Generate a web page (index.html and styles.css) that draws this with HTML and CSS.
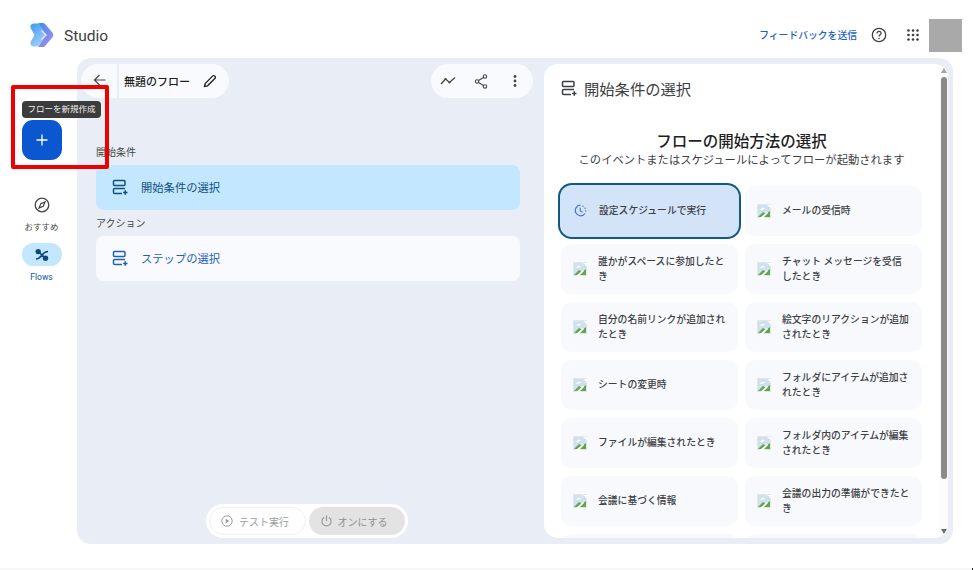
FILE: index.html
```html
<!DOCTYPE html>
<html lang="ja">
<head>
    <meta charset="UTF-8">
    <meta name="viewport" content="width=device-width, initial-scale=1.0">
    <title>Studio</title>
    <link rel="stylesheet" href="styles.css">
</head>
<body>
    <svg class="defs" width="0" height="0">
        <symbol id="step" viewBox="0 0 16 16">
            <rect x="1.5" y="1.5" width="11.5" height="5" rx="1" fill="none" stroke="currentColor" stroke-width="1.5"/>
            <path d="M13 9.5H2.8a1.3 1.3 0 0 0-1.3 1.3v2.4a1.3 1.3 0 0 0 1.3 1.3H10" fill="none" stroke="currentColor" stroke-width="1.5"/>
            <path d="M13.3 11.3v4.4M11.1 13.5h4.4" fill="none" stroke="currentColor" stroke-width="1.5"/>
        </symbol>
        <symbol id="broken" viewBox="0 0 14 14">
            <rect width="14" height="14" fill="#e4e6e6"/>
            <rect x="1" y="1" width="12" height="12" fill="#cfe0ef"/>
            <path d="M1 13l5-5 3 2 4-3v6z" fill="#5fa64a"/>
            <path d="M3 5.5c2-2 4-2 5-1-1 1-3 1.5-5 1z" fill="#fff"/>
            <path d="M10 1l4 0v3zM3 14l7-6 1 1-5 5z" fill="#fff"/>
        </symbol>
    </svg>

    <header class="topbar">
        <div class="brand">
            <svg class="logo" width="24" height="26" viewBox="0 0 24 26">
                <defs>
                    <linearGradient id="logo-back" x1="0" y1="0" x2="0.6" y2="1">
                        <stop offset="0" stop-color="#3a9af4"/>
                        <stop offset="1" stop-color="#a8cff9"/>
                    </linearGradient>
                    <linearGradient id="logo-front" x1="0" y1="0" x2="0.8" y2="1">
                        <stop offset="0" stop-color="#3f8df0"/>
                        <stop offset="1" stop-color="#a58bea"/>
                    </linearGradient>
                </defs>
                <path d="M4 1.5c-3 0-4.5 3-3 5.3L4.5 13 1 19.2c-1.5 2.3 0 5.3 3 5.3h6L17 13 10 1.5z" fill="url(#logo-back)"/>
                <path d="M8.5 1h4c1.3 0 2.3.6 3 1.6l7 8.2c1.1 1.3 1.1 3.1 0 4.4l-7 8.2c-.7 1-1.7 1.6-3 1.6h-4l7.5-12z" fill="url(#logo-front)"/>
                <path d="M11.5 8.5L16 13l-4.5 4.5" fill="none" stroke="#e9e6fb" stroke-width="1.4"/>
            </svg>
            <span class="brand-name">Studio</span>
        </div>
        <div class="topbar-right">
            <a class="feedback">フィードバックを送信</a>
            <svg class="help" width="16" height="16" viewBox="0 0 16 16">
                <circle cx="8" cy="8" r="6.7" fill="none" stroke="#3c4043" stroke-width="1.3"/>
                <path d="M5.9 6.4C5.9 5 6.9 4.3 8 4.3c1.2 0 2.1.8 2.1 1.9 0 1.5-2.1 1.5-2.1 3.3" fill="none" stroke="#3c4043" stroke-width="1.2"/>
                <circle cx="8" cy="11.5" r=".8" fill="#3c4043"/>
            </svg>
            <svg class="apps" width="12" height="12" viewBox="0 0 12 12" fill="#3c4043">
                <circle cx="1.5" cy="1.5" r="1.3"/><circle cx="6" cy="1.5" r="1.3"/><circle cx="10.5" cy="1.5" r="1.3"/>
                <circle cx="1.5" cy="6" r="1.3"/><circle cx="6" cy="6" r="1.3"/><circle cx="10.5" cy="6" r="1.3"/>
                <circle cx="1.5" cy="10.5" r="1.3"/><circle cx="6" cy="10.5" r="1.3"/><circle cx="10.5" cy="10.5" r="1.3"/>
            </svg>
            <div class="avatar"></div>
        </div>
    </header>

    <div class="layout">
        <nav class="sidebar">
            <button class="fab">
                <svg width="12" height="12" viewBox="0 0 12 12"><path d="M6 .5v11M.5 6h11" stroke="#fff" stroke-width="1.3"/></svg>
            </button>
            <div class="tooltip">フローを新規作成</div>
            <div class="nav-item">
                <svg class="nav-icon" width="16" height="16" viewBox="0 0 16 16">
                    <circle cx="8" cy="8" r="6.8" fill="none" stroke="#444746" stroke-width="1.3"/>
                    <path d="M11 5L9.2 9.2 5 11l1.8-4.2z" fill="none" stroke="#444746" stroke-width="1.2"/>
                </svg>
                <span>おすすめ</span>
            </div>
            <div class="nav-item active">
                <div class="nav-pill">
                    <svg width="16" height="14" viewBox="0 0 16 14">
                        <path d="M4.2 3.6L11.5 10.3M14 3.5C11 3.5 9.5 5 8 7S5 11 2 11" fill="none" stroke="#0b4a78" stroke-width="1.6"/>
                        <circle cx="4.2" cy="3.6" r="2.7" fill="#0b4a78"/>
                        <circle cx="11.5" cy="10.3" r="2.7" fill="#0b4a78"/>
                    </svg>
                </div>
                <span>Flows</span>
            </div>
            <div class="highlight"></div>
        </nav>

        <main class="panel">
            <section class="editor">
                <div class="toolbar">
                    <div class="title-pill">
                        <button class="back">
                            <svg width="13" height="12" viewBox="0 0 13 12"><path d="M12.5 6H1.5M6.5 1L1.5 6l5 5" fill="none" stroke="#444746" stroke-width="1.2"/></svg>
                        </button>
                        <div class="title">
                            <span>無題のフロー</span>
                            <svg width="14" height="14" viewBox="0 0 14 14"><path d="M1.5 12.5l.7-3L9.8 1.9a1.2 1.2 0 0 1 1.7 0l.6.6a1.2 1.2 0 0 1 0 1.7L4.5 11.8z" fill="none" stroke="#1f1f1f" stroke-width="1.3"/></svg>
                        </div>
                    </div>
                    <div class="action-pill">
                        <svg width="16" height="10" viewBox="0 0 16 10"><path d="M1 8l4.5-5 4 3.5L15 1.5" fill="none" stroke="#444746" stroke-width="1.3"/><circle cx="5.5" cy="3" r="1.1" fill="#444746"/><circle cx="9.5" cy="6.5" r="1.1" fill="#444746"/></svg>
                        <svg width="14" height="15" viewBox="0 0 14 15"><path d="M11 2.5L3 7.5l8 5" fill="none" stroke="#444746" stroke-width="1.1"/><circle cx="11" cy="2.5" r="1.7" fill="#fff" stroke="#444746" stroke-width="1.1"/><circle cx="3" cy="7.5" r="1.7" fill="#fff" stroke="#444746" stroke-width="1.1"/><circle cx="11" cy="12.5" r="1.7" fill="#fff" stroke="#444746" stroke-width="1.1"/></svg>
                        <svg class="more" width="4" height="12" viewBox="0 0 4 12" fill="#444746"><circle cx="2" cy="1.5" r="1.4"/><circle cx="2" cy="6" r="1.4"/><circle cx="2" cy="10.5" r="1.4"/></svg>
                    </div>
                </div>

                <div class="section-label first">開始条件</div>
                <div class="step-row trigger">
                    <svg width="16" height="16"><use href="#step"/></svg>
                    <span>開始条件の選択</span>
                </div>
                <div class="section-label">アクション</div>
                <div class="step-row">
                    <svg width="16" height="16"><use href="#step"/></svg>
                    <span>ステップの選択</span>
                </div>

                <div class="run-bar">
                    <button class="test-btn">
                        <svg width="12" height="12" viewBox="0 0 12 12"><circle cx="6" cy="6" r="5.2" fill="none" stroke="#9a9c9c" stroke-width="1"/><path d="M4.7 3.6L8.2 6 4.7 8.4z" fill="#9a9c9c"/></svg>
                        テスト実行
                    </button>
                    <button class="on-btn">
                        <svg width="11" height="12" viewBox="0 0 11 12"><path d="M5.5 .5V6M3 2.5a4.6 4.6 0 1 0 5 0" fill="none" stroke="#9a9c9c" stroke-width="1.2"/></svg>
                        オンにする
                    </button>
                </div>
            </section>

            <aside class="chooser">
                <h2 class="chooser-head">
                    <svg width="16" height="16"><use href="#step"/></svg>
                    開始条件の選択
                </h2>
                <h3 class="chooser-title">フローの開始方法の選択</h3>
                <p class="chooser-sub">このイベントまたはスケジュールによってフローが起動されます</p>
                <div class="options">
                    <div class="option selected">
                        <svg class="clock" width="13" height="13" viewBox="0 0 13 13">
                            <path d="M6.5 1.2A5.3 5.3 0 1 0 11 9.5" fill="none" stroke="#4a6fd8" stroke-width="1.2"/>
                            <path d="M6.2 3.8v3l2.3 1.5" fill="none" stroke="#4a6fd8" stroke-width="1.1"/>
                            <circle cx="9" cy="2.3" r=".7" fill="#4a6fd8"/><circle cx="11" cy="4.3" r=".7" fill="#4a6fd8"/><circle cx="11.8" cy="7" r=".7" fill="#4a6fd8"/>
                        </svg>
                        <span>設定スケジュールで実行</span>
                    </div>
                    <div class="option"><svg width="14" height="14"><use href="#broken"/></svg><span>メールの受信時</span></div>
                    <div class="option"><svg width="14" height="14"><use href="#broken"/></svg><span>誰かがスペースに参加したとき</span></div>
                    <div class="option"><svg width="14" height="14"><use href="#broken"/></svg><span>チャット メッセージを受信したとき</span></div>
                    <div class="option"><svg width="14" height="14"><use href="#broken"/></svg><span>自分の名前リンクが追加されたとき</span></div>
                    <div class="option"><svg width="14" height="14"><use href="#broken"/></svg><span>絵文字のリアクションが追加されたとき</span></div>
                    <div class="option"><svg width="14" height="14"><use href="#broken"/></svg><span>シートの変更時</span></div>
                    <div class="option"><svg width="14" height="14"><use href="#broken"/></svg><span>フォルダにアイテムが追加されたとき</span></div>
                    <div class="option"><svg width="14" height="14"><use href="#broken"/></svg><span>ファイルが編集されたとき</span></div>
                    <div class="option"><svg width="14" height="14"><use href="#broken"/></svg><span>フォルダ内のアイテムが編集されたとき</span></div>
                    <div class="option"><svg width="14" height="14"><use href="#broken"/></svg><span>会議に基づく情報</span></div>
                    <div class="option"><svg width="14" height="14"><use href="#broken"/></svg><span>会議の出力の準備ができたとき</span></div>
                    <div class="option"></div>
                    <div class="option"></div>
                </div>
                <div class="scrollbar">
                    <div class="arrow up"></div>
                    <div class="thumb"></div>
                    <div class="arrow down"></div>
                </div>
            </aside>
        </main>
    </div>
    <div class="bottom-line"></div>
</body>
</html>
```

FILE: styles.css
```css
* {
    box-sizing: border-box;
}

body {
    margin: 0;
    height: 570px;
    overflow: hidden;
    background-color: #fff;
    font-family: 'Roboto', 'Noto Sans CJK JP', sans-serif;
    color: #1f1f1f;
}

button {
    font-family: inherit;
    border: none;
}

.defs {
    position: absolute;
}

.topbar {
    height: 58px;
    display: flex;
    justify-content: space-between;
    align-items: center;
    padding: 12px 11px 0 30px;
}

.brand {
    display: flex;
    align-items: center;
    gap: 10px;
}

.brand-name {
    font-size: 15.5px;
    color: #3c4043;
    margin-top: 1px;
}

.topbar-right {
    display: flex;
    align-items: center;
}

.feedback {
    font-size: 9.8px;
    font-weight: 500;
    color: #1a62c5;
    margin-right: 14px;
}

.help {
    margin-right: 20px;
}

.apps {
    margin-right: 10px;
}

.avatar {
    width: 33px;
    height: 33px;
    background-color: #a9a9a9;
}

.layout {
    display: flex;
    height: 486px;
}

.sidebar {
    position: relative;
    width: 77px;
    display: flex;
    flex-direction: column;
    align-items: center;
    padding: 62px 0 0 6px;
}

.fab {
    width: 40px;
    height: 40px;
    border-radius: 11px;
    background-color: #0b57d0;
    display: flex;
    align-items: center;
    justify-content: center;
    margin-bottom: 37px;
    flex-shrink: 0;
}

.tooltip {
    position: absolute;
    left: 22px;
    top: 43px;
    width: 79px;
    height: 17px;
    line-height: 17px;
    border-radius: 4px;
    background-color: #3c3c3c;
    color: #f1f1f1;
    font-size: 8.5px;
    text-align: center;
    white-space: nowrap;
    z-index: 3;
}

.highlight {
    position: absolute;
    left: 11px;
    top: 27px;
    width: 98px;
    height: 84px;
    border: 4px solid #ee0000;
    border-radius: 2px;
    z-index: 2;
}

.nav-item {
    display: flex;
    flex-direction: column;
    align-items: center;
    font-size: 8.5px;
    color: #444746;
    margin-bottom: 13px;
}

.nav-icon {
    margin-bottom: 7px;
    margin-left: 1px;
}

.nav-item.active {
    color: #0b5a94;
    margin-top: -2px;
}

.nav-pill {
    width: 40px;
    height: 23px;
    border-radius: 12px;
    background-color: #c2e7ff;
    display: flex;
    align-items: center;
    justify-content: center;
    margin-bottom: 6px;
}

.panel {
    width: 876px;
    height: 486px;
    background-color: #e9eef6;
    border-radius: 14px;
    display: flex;
    padding: 6px 5px 6px 0;
}

.editor {
    position: relative;
    width: 467px;
    padding: 0 24px 0 19px;
}

.toolbar {
    height: 34px;
    margin-left: -15px;
    margin-right: -13px;
    display: flex;
    justify-content: space-between;
}

.title-pill {
    display: flex;
    gap: 2px;
}

.back {
    width: 36px;
    height: 34px;
    border-radius: 17px 0 0 17px;
    background-color: #f8fafd;
    padding: 0;
}

.title {
    height: 34px;
    width: 110px;
    border-radius: 0 17px 17px 0;
    background-color: #f8fafd;
    display: flex;
    align-items: center;
    gap: 13px;
    padding-left: 5px;
    font-size: 11px;
    font-weight: 500;
    white-space: nowrap;
}

.action-pill {
    width: 102px;
    height: 34px;
    border-radius: 17px;
    background-color: #f8fafd;
    display: flex;
    align-items: center;
    gap: 18px;
    padding-left: 9px;
}

.action-pill .more {
    margin-left: 7px;
}

.section-label {
    font-size: 10px;
    color: #444746;
    height: 14px;
    line-height: 14px;
    margin: 7px 0 5px;
}

.section-label.first {
    margin-top: 48px;
}

.step-row {
    height: 45px;
    border-radius: 8px;
    background-color: #f8fafd;
    display: flex;
    align-items: center;
    gap: 13px;
    padding: 0 0 2px 16px;
    font-size: 11.3px;
    color: #1f5fb8;
}

.step-row.trigger {
    background-color: #c2e7ff;
    color: #10507f;
}

.run-bar {
    position: absolute;
    left: 129px;
    top: 440px;
    width: 202px;
    height: 34px;
    border-radius: 17px;
    background-color: #fff;
    display: flex;
    align-items: center;
    gap: 3px;
    padding: 3px;
}

.test-btn,
.on-btn {
    height: 28px;
    width: 97px;
    border-radius: 14px;
    display: flex;
    align-items: center;
    gap: 6px;
    padding: 0 0 0 12px;
    font-size: 10px;
    color: #9a9c9c;
}

.test-btn {
    background-color: #fff;
    border: 1px solid #eceff3;
    padding-left: 11px;
}

.on-btn {
    background-color: #e3e3e3;
    color: #8f9191;
}

.chooser {
    position: relative;
    width: 404px;
    height: 474px;
    border-radius: 14px;
    background-color: #fff;
    overflow: hidden;
    padding: 0 26px 0 17px;
}

.chooser-head {
    margin: 14px 0 0;
    height: 20px;
    display: flex;
    align-items: center;
    gap: 7px;
    font-size: 15.3px;
    font-weight: 400;
    color: #3c4043;
}

.chooser-title {
    margin: 34px 0 0;
    height: 20px;
    line-height: 20px;
    text-align: center;
    font-size: 15.5px;
    font-weight: 500;
}

.chooser-sub {
    margin: 1px 0 0;
    height: 16px;
    line-height: 16px;
    text-align: center;
    font-size: 11.3px;
    color: #3c4043;
    white-space: nowrap;
}

.options {
    margin-top: 17px;
    display: grid;
    grid-template-columns: 177px 177px;
    grid-auto-rows: 50px;
    column-gap: 7px;
    row-gap: 8px;
}

.option {
    border-radius: 10px;
    background-color: #f8f9fd;
    display: flex;
    align-items: center;
    gap: 11px;
    padding: 0 11px 1px 12px;
    font-size: 9.8px;
    font-weight: 500;
    line-height: 15px;
    color: #3c4043;
}

.option svg {
    flex-shrink: 0;
}

.option.selected {
    background-color: #d3e3f8;
    border-radius: 11px;
    box-shadow: 0 0 0 1px #d3e3f8, 0 0 0 3px #0f5b85;
}

.clock {
    margin: 0 1px;
}

.scrollbar {
    position: absolute;
    top: 0;
    right: 0;
    width: 9px;
    height: 100%;
    background-color: #fcfcfc;
    display: flex;
    flex-direction: column;
    align-items: center;
    padding: 4px 0;
}

.thumb {
    width: 6px;
    height: 402px;
    margin-top: 4px;
    border-radius: 3px;
    background-color: #8a8a8a;
}

.arrow {
    width: 0;
    height: 0;
    border-left: 3.5px solid transparent;
    border-right: 3.5px solid transparent;
}

.arrow.up {
    border-bottom: 5px solid #a3a3a3;
}

.arrow.down {
    margin-top: auto;
    border-top: 5px solid #6d6d6d;
}

.bottom-line {
    height: 2px;
    margin-top: 24px;
    background-color: #f7f7f7;
    border-right: 1px solid #222;
}
```
